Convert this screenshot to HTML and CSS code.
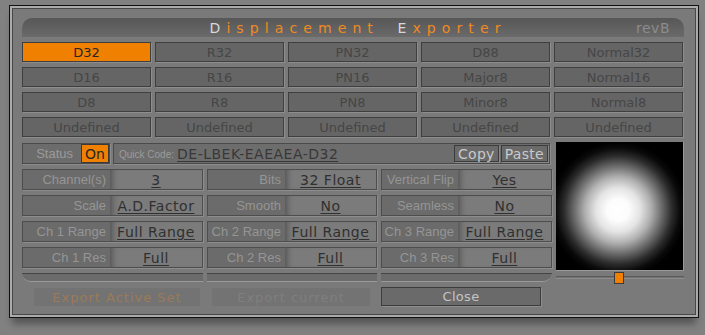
FILE: index.html
```html
<!DOCTYPE html>
<html>
<head>
<meta charset="utf-8">
<link rel="stylesheet" href="styles.css">
</head>
<body>
<div class="frame">
  <div class="panel">
    <div class="titlebar">
      <span></span>
      <span class="title"><span class="hl">D</span>isplacement <span class="hl">E</span>xporter</span>
      <span class="rev">revB</span>
    </div>
    <div class="presets">
      <div class="pbtn active">D32</div>
      <div class="pbtn">R32</div>
      <div class="pbtn">PN32</div>
      <div class="pbtn">D88</div>
      <div class="pbtn">Normal32</div>
      <div class="pbtn">D16</div>
      <div class="pbtn">R16</div>
      <div class="pbtn">PN16</div>
      <div class="pbtn">Major8</div>
      <div class="pbtn">Normal16</div>
      <div class="pbtn">D8</div>
      <div class="pbtn">R8</div>
      <div class="pbtn">PN8</div>
      <div class="pbtn">Minor8</div>
      <div class="pbtn">Normal8</div>
      <div class="pbtn">Undefined</div>
      <div class="pbtn">Undefined</div>
      <div class="pbtn">Undefined</div>
      <div class="pbtn">Undefined</div>
      <div class="pbtn">Undefined</div>
    </div>
    <div class="lower">
      <div class="left">
        <div class="status-row">
          <div class="status"><span class="status-label">Status</span><span class="on">On</span></div>
          <div class="qc">
            <span class="qc-label">Quick Code:</span>
            <span class="qc-code">DE-LBEK-EAEAEA-D32</span>
            <span class="qc-btns"><span class="sbtn">Copy</span><span class="sbtn">Paste</span></span>
          </div>
        </div>
        <div class="params">
          <div class="cell c1"><span class="lab">Channel(s)</span><span class="val">3</span></div>
          <div class="cell c2"><span class="lab">Bits</span><span class="val">32 Float</span></div>
          <div class="cell c3"><span class="lab">Vertical Flip</span><span class="val">Yes</span></div>
          <div class="cell c1"><span class="lab">Scale</span><span class="val">A.D.Factor</span></div>
          <div class="cell c2"><span class="lab">Smooth</span><span class="val">No</span></div>
          <div class="cell c3"><span class="lab">Seamless</span><span class="val">No</span></div>
          <div class="cell c1"><span class="lab">Ch 1 Range</span><span class="val">Full Range</span></div>
          <div class="cell c2"><span class="lab">Ch 2 Range</span><span class="val">Full Range</span></div>
          <div class="cell c3"><span class="lab">Ch 3 Range</span><span class="val">Full Range</span></div>
          <div class="cell c1"><span class="lab">Ch 1 Res</span><span class="val">Full</span></div>
          <div class="cell c2"><span class="lab">Ch 2 Res</span><span class="val">Full</span></div>
          <div class="cell c3"><span class="lab">Ch 3 Res</span><span class="val">Full</span></div>
          <div class="bar bar-l"></div>
          <div class="bar"></div>
          <div class="bar bar-r"></div>
        </div>
        <div class="actions">
          <div class="act act-set">Export Active Set</div>
          <div class="act act-cur">Export current</div>
          <div class="act act-close">Close</div>
        </div>
      </div>
      <div class="right">
        <div class="preview"></div>
        <div class="slider"><div class="track"></div><div class="handle"></div></div>
      </div>
    </div>
  </div>
</div>
</body>
</html>
```
FILE: styles.css
```css
* { box-sizing: border-box; }
html, body { margin: 0; padding: 0; }
body {
  background: #818181;
  width: 705px;
  height: 335px;
  overflow: hidden;
  font-family: "DejaVu Sans", Verdana, sans-serif;
  font-size: 13px;
  padding: 5px 0 0 9px;
}
.frame {
  width: 690px;
  height: 313px;
  border: 1px solid #111;
  background: #ababab;
  padding: 2px;
  box-shadow: 0 9px 7px -3px rgba(0,0,0,0.35);
}
.panel {
  height: 100%;
  border: 1px solid #484848;
  background: #7a7a7a;
  padding: 9px 10px 0 9px;
}
.titlebar {
  height: 19px;
  width: 662px;
  border-radius: 10px 10px 0 0;
  background: linear-gradient(#575757, #6a6a6a);
  display: grid;
  grid-template-columns: 1fr auto 1fr;
  align-items: center;
  font-size: 14px;
}
.title {
  color: #f08a1e;
  letter-spacing: 6.1px;
  word-spacing: 8px;
  padding-left: 10px;
}
.title .hl { color: #d8d8d8; }
.rev {
  justify-self: end;
  color: #8c8c8c;
  padding-right: 14px;
  letter-spacing: 0.5px;
}
.presets {
  margin-top: 5px;
  display: grid;
  grid-template-columns: repeat(5, 129px);
  grid-auto-rows: 20px;
  column-gap: 4px;
  row-gap: 5px;
}
.pbtn {
  background: #656565;
  border: 1px solid #3f3f3f;
  box-shadow: 1px 1px 0 #8d8d8d;
  color: #464646;
  display: flex;
  align-items: center;
  justify-content: center;
  line-height: 1;
}
.pbtn.active {
  background: #f08000;
  color: #262626;
}
.lower {
  margin-top: 5px;
  display: grid;
  grid-template-columns: 530px 128px;
  column-gap: 4px;
}
.status-row {
  margin-top: 1px;
  height: 21px;
  display: flex;
  gap: 3px;
}
.status {
  width: 88px;
  background: #6c6c6c;
  border: 1px solid #4a4a4a;
  box-shadow: 1px 1px 0 #8d8d8d;
  display: flex;
  align-items: stretch;
  justify-content: flex-end;
}
.status-label {
  font-family: "Liberation Sans", Arial, sans-serif;
  color: #9b9b9b;
  font-size: 13px;
  display: flex;
  align-items: center;
  margin-right: 8px;
}
.on {
  width: 28px;
  background: #f08000;
  border: 1px solid #3a3a3a;
  color: #262626;
  font-size: 14px;
  display: flex;
  align-items: center;
  justify-content: center;
}
.qc {
  width: 437px;
  background: #6d6d6d;
  border: 1px solid #4a4a4a;
  box-shadow: 1px 1px 0 #8d8d8d;
  display: flex;
  align-items: center;
  padding-left: 5px;
}
.qc-label {
  font-family: "Liberation Sans", Arial, sans-serif;
  font-size: 10px;
  color: #9b9b9b;
  margin-right: 3px;
  padding-top: 2px;
}
.qc-code {
  font-size: 14px;
  letter-spacing: 0.5px;
  color: #383838;
  text-decoration: underline;
  text-underline-offset: 2px;
}
.qc-btns {
  margin-left: auto;
  display: flex;
  gap: 2px;
  padding-right: 1px;
}
.sbtn {
  height: 17px;
  background: #6a6a6a;
  border: 1px solid #3c3c3c;
  box-shadow: 1px 1px 0 #8a8a8a;
  color: #c9c9c9;
  font-size: 14px;
  display: flex;
  align-items: center;
  padding: 0 3px;
  letter-spacing: 0.3px;
}
.params {
  margin-top: 5px;
  display: grid;
  grid-template-columns: 181px 170px 171px;
  grid-template-rows: repeat(4, 21px) 9px;
  column-gap: 4px;
  row-gap: 5px;
}
.cell {
  display: flex;
  border: 1px solid #4d4d4d;
  box-shadow: 1px 1px 0 #8d8d8d;
}
.lab {
  background: #6b6b6b;
  color: #959595;
  font-family: "Liberation Sans", Arial, sans-serif;
  font-size: 13px;
  display: flex;
  align-items: center;
  justify-content: flex-end;
  padding-right: 4px;
}
.c1 .lab { width: 87px; }
.c2 .lab { width: 77px; }
.c3 .lab { width: 76px; }
.val {
  flex: 1;
  background: #7b7b7b;
  box-shadow: inset 7px 0 6px -5px rgba(0,0,0,0.35);
  color: #303030;
  font-size: 14px;
  letter-spacing: 0.5px;
  text-decoration: underline;
  text-underline-offset: 2px;
  display: flex;
  align-items: center;
  justify-content: center;
}
.bar {
  background: #6b6b6b;
  border-top: 1px solid #454545;
  border-bottom: 1px solid #9a9a9a;
}
.bar-l { border-bottom-left-radius: 9px; }
.bar-r { border-bottom-right-radius: 9px; }
.actions {
  margin-top: 5px;
  display: flex;
  align-items: flex-start;
  padding-left: 12px;
}
.act {
  height: 19px;
  display: flex;
  align-items: center;
  justify-content: center;
  font-size: 13px;
  letter-spacing: 1px;
}
.act-set {
  width: 166px;
  margin-top: 1px;
  height: 18px;
  background: #737373;
  color: #9c7a58;
}
.act-cur {
  width: 158px;
  margin-left: 12px;
  margin-top: 1px;
  height: 18px;
  background: #737373;
  color: #7f7f7f;
}
.act-close {
  width: 160px;
  margin-left: 11px;
  background: #6a6a6a;
  border: 1px solid #3c3c3c;
  box-shadow: 1px 1px 0 #8d8d8d;
  color: #c4c4c4;
  letter-spacing: 0.3px;
}
.right {
  display: flex;
  flex-direction: column;
}
.preview {
  width: 128px;
  height: 129px;
  border-right: 1px solid #9a9a9a;
  border-bottom: 1px solid #9a9a9a;
  background: radial-gradient(circle at 62px 68px, #ffffff 0, #fcfcfc 11px, #e4e4e4 22px, #b0b0b0 33px, #6a6a6a 44px, #2c2c2c 54px, #0a0a0a 62px, #000 68px);
}
.slider {
  position: relative;
  height: 13px;
  padding-top: 5px;
}
.track {
  height: 3px;
  border-top: 1px solid #5c5c5c;
  border-bottom: 1px solid #8e8e8e;
  background: #707070;
}
.handle {
  position: absolute;
  left: 58px;
  top: 1px;
  width: 10px;
  height: 12px;
  background: #f08000;
  border: 1px solid #3a3a3a;
}
```
